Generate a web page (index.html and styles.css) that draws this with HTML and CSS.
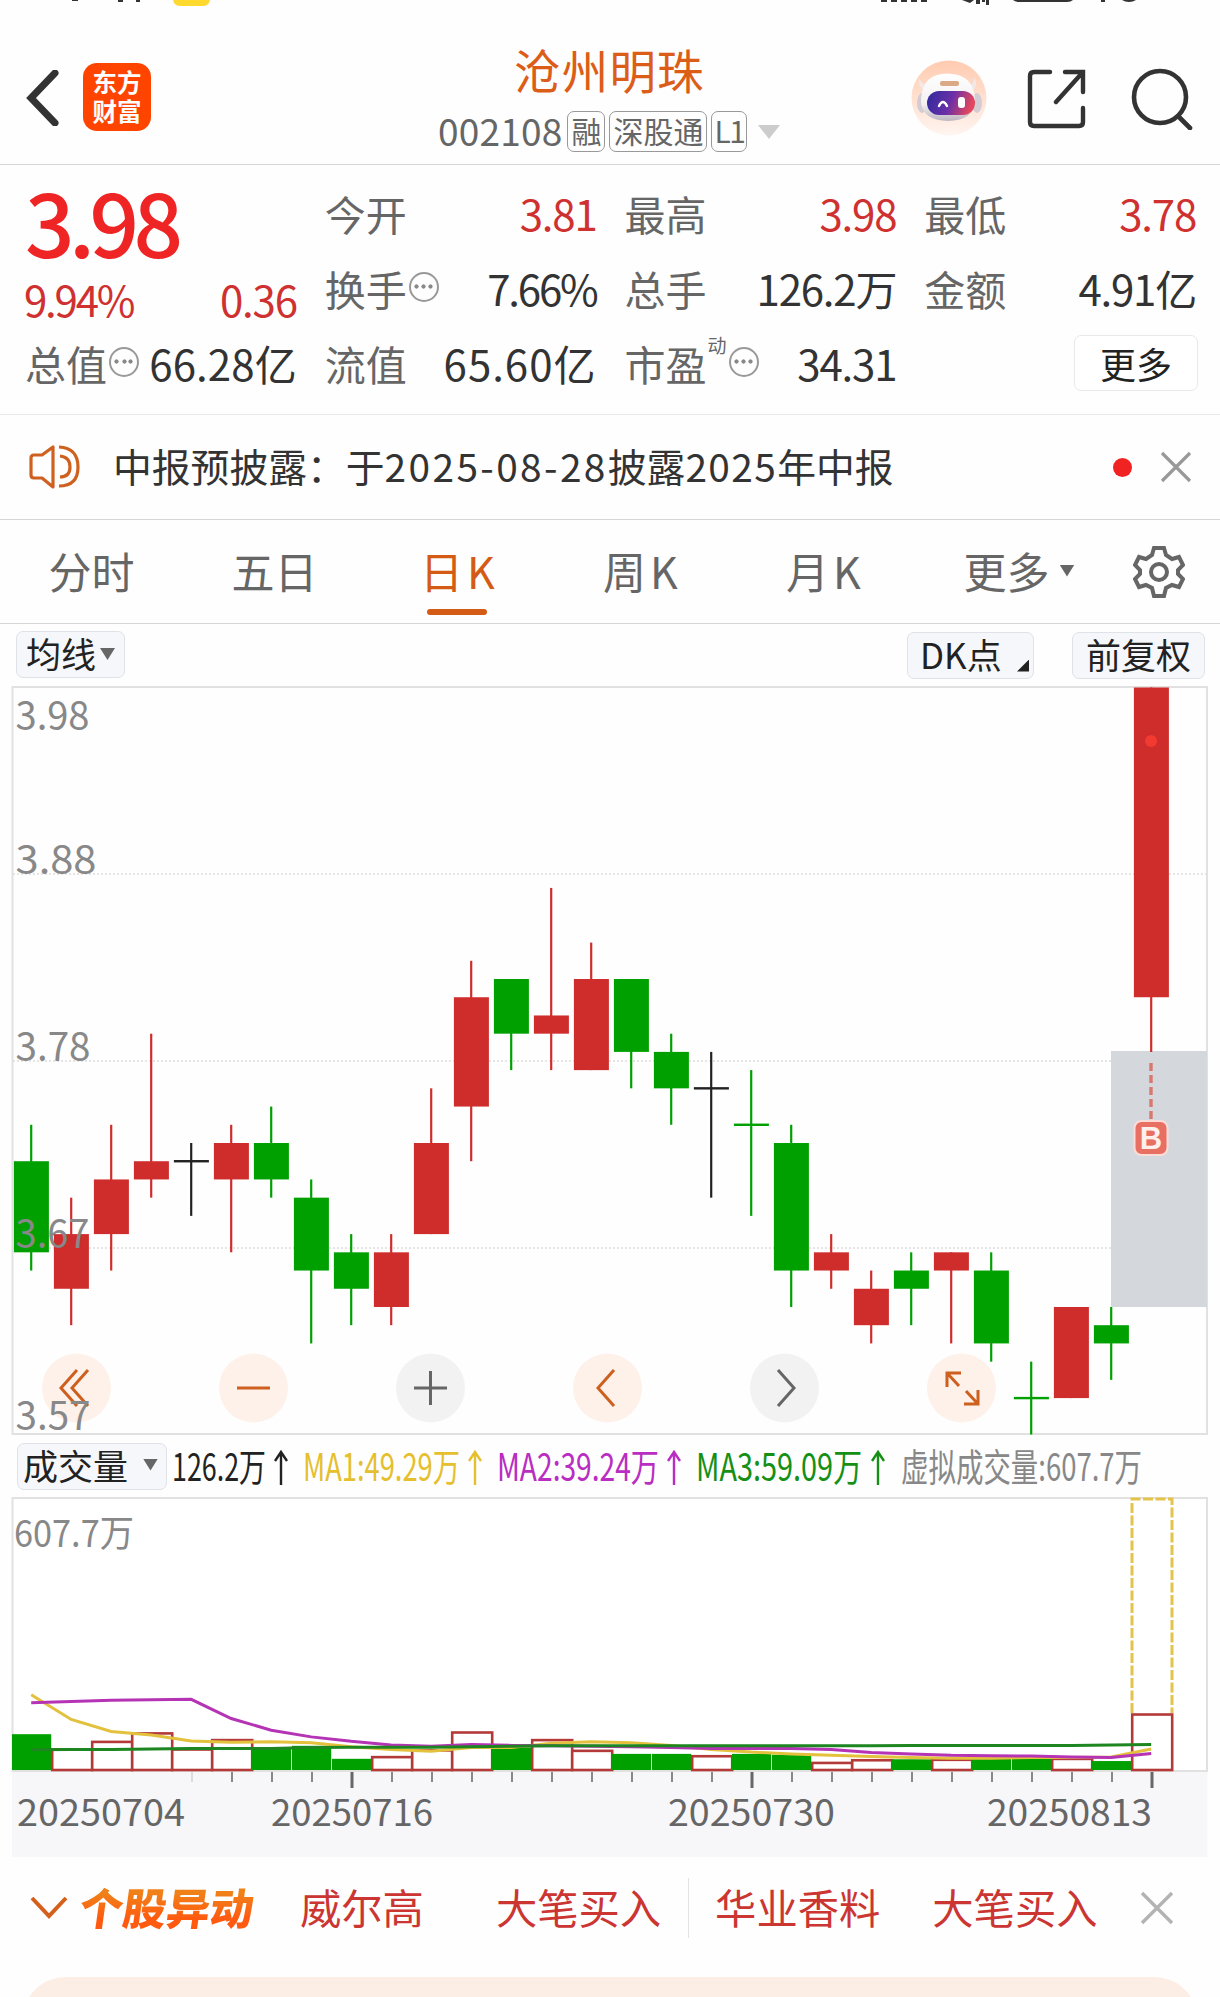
FILE: index.html
```html
<!DOCTYPE html>
<html lang="zh-CN">
  <head>
    <meta charset="UTF-8" />
    <title>沧州明珠 002108</title>
    <link rel="stylesheet" href="styles.css">
  </head>
  <body>
    <header class="header">
      <svg class="status" width="1220" height="8" viewBox="0 0 1220 8">
        <path d="M72 0h6v1h-6zM118 0h5v2h-5zM136 0h4v2h-4z" fill="#333" />
        <path d="M173 0h37q-1 6-8 6h-21q-7 0-8-6z" fill="#ffd92e" />
        <path d="M881 0h6v2h-6zM891 0h6v2h-6zM901 0h6v2h-6zM911 0h6v2h-6zM921 0h6v2h-6zM962 0h12l-4 3zM976 0h4v4h-4zM982 0h3v2h-3zM986 0h3v5h-3zM1013 0h60q-2 2-6 2h-48q-4 0-6-2zM1101 0h4v2h-4zM1122 0h14q-3 2-7 2t-7-2z" fill="#333" />
      </svg>
      <div class="header-row">
        <svg class="back" width="34" height="56" viewBox="0 0 34 56">
          <path d="M29 3 5 28l24 25" fill="none" stroke="#333" stroke-width="7" stroke-linecap="round" />
        </svg>
        <div class="logo"><span>东方</span><span>财富</span></div>
        <div class="stock">
          <h1 class="stock-name">沧州明珠</h1>
          <div class="stock-code">
            <span class="code">002108</span>
            <span class="tag">融</span>
            <span class="tag">深股通</span>
            <span class="tag tag-l1">L1</span>
            <svg class="code-arrow" width="22" height="14" viewBox="0 0 22 14"><path d="M0 0h22L11 14z" fill="#ccc" /></svg>
          </div>
        </div>
        <div class="header-icons">
          <svg width="76" height="76" viewBox="0 0 76 76">
            <defs>
              <linearGradient id="faceBg" x1="0" y1="0" x2="0" y2="1"><stop offset="0" stop-color="#ffcbb0" /><stop offset="1" stop-color="#fff5f0" /></linearGradient>
              <linearGradient id="visor" x1="0" y1="0" x2="1" y2=".2"><stop offset="0" stop-color="#2c2b9c" /><stop offset=".55" stop-color="#6a2fa8" /><stop offset="1" stop-color="#e2475f" /></linearGradient>
              <linearGradient id="helmet" x1="0" y1="0" x2="0" y2="1"><stop offset="0" stop-color="#fff" /><stop offset=".65" stop-color="#f3eff2" /><stop offset="1" stop-color="#bdb6c0" /></linearGradient>
            </defs>
            <circle cx="38" cy="38" r="37.5" fill="url(#faceBg)" />
            <ellipse cx="11" cy="43" rx="5" ry="10" fill="#d3ccd4" />
            <ellipse cx="66" cy="43" rx="5" ry="10" fill="#d3ccd4" />
            <path d="M8 17q1 7 9 8l-1 7q-10-4-8-15zM63 17q1 7-5 8l3 6q7-6 2-14z" fill="#f1e9e8" />
            <path d="M10 42q0-22 16-27 9-3 21 0 17 5 17 27-1 18-27 19-26-1-27-19z" fill="url(#helmet)" />
            <rect x="29" y="21" width="19" height="5" rx="2" fill="#dba985" />
            <rect x="16" y="31" width="48" height="24" rx="12" fill="url(#visor)" />
            <path d="M28 46q4-8 8 0" fill="none" stroke="#fff" stroke-width="2.4" stroke-linecap="round" />
            <rect x="47" y="37" width="7" height="11" rx="3" fill="#fff" />
          </svg>
          <svg class="share" width="60" height="60" viewBox="0 0 60 60" fill="none" stroke="#333" stroke-width="4.4" stroke-linecap="round">
            <path d="M23 3H7Q3 3 3 7v46q0 4 4 4h45q4 0 4-4V39M38 3h18v20M56 3 29 33" />
          </svg>
          <svg class="search" width="62" height="62" viewBox="0 0 62 62" fill="none" stroke="#333" stroke-width="4.6" stroke-linecap="round">
            <circle cx="29" cy="29" r="26" /><path d="M48 49l11 11" />
          </svg>
        </div>
      </div>
    </header>

    <section class="quote">
      <div class="col">
        <div class="price">3.98</div>
        <div class="item change"><b class="up pct">9.94%</b><b class="up">0.36</b></div>
        <div class="item"><span>总值</span><i class="info"></i><b class="wide">66.28亿</b></div>
      </div>
      <div class="col">
        <div class="item"><span>今开</span><b class="up">3.81</b></div>
        <div class="item"><span>换手</span><i class="info"></i><b class="pct">7.66%</b></div>
        <div class="item"><span>流值</span><b class="wider">65.60亿</b></div>
      </div>
      <div class="col">
        <div class="item"><span>最高</span><b class="up">3.98</b></div>
        <div class="item"><span>总手</span><b>126.2万</b></div>
        <div class="item"><span>市盈</span><sup>动</sup><i class="info"></i><b>34.31</b></div>
      </div>
      <div class="col">
        <div class="item"><span>最低</span><b class="up">3.78</b></div>
        <div class="item"><span>金额</span><b>4.91亿</b></div>
        <div class="item"><button class="more">更多</button></div>
      </div>
    </section>

    <section class="notice">
      <svg width="54" height="46" viewBox="0 0 54 46" fill="none" stroke="#cf6120" stroke-width="3.2" stroke-linejoin="round">
        <path d="M24 3v40L13 34H5q-3 0-3-3V14q0-3 3-3h8zM30 3q19 1 19 20T30 42M31 12q10 1 10 11T31 33" />
      </svg>
      <p class="notice-text">中报预披露：于<span class="date">2025-08-28</span>披露<span class="year">2025</span>年中报</p>
      <i class="dot"></i>
      <svg width="32" height="32" viewBox="0 0 32 32"><path d="M2 2l28 28M30 2 2 30" stroke="#999" stroke-width="3.2" /></svg>
    </section>

    <nav class="tabs">
      <a>分时</a>
      <a>五日</a>
      <a class="active">日<span class="k">K</span></a>
      <a>周<span class="k">K</span></a>
      <a>月<span class="k">K</span></a>
      <a class="tab-more">更多<i class="tri"></i></a>
      <svg width="52" height="52" viewBox="0 0 52 52" fill="none" stroke="#666" stroke-width="4" stroke-linejoin="miter">
        <path d="M21 2h10l2 7 6 4 7-2 4 8-5 5v4l5 5-4 8-7-2-6 3-2 8H21l-2-8-6-3-7 2-4-8 5-5v-4l-5-5 4-8 7 2 6-4z" />
        <circle cx="26" cy="26" r="8" />
      </svg>
    </nav>

    <div class="toolbar">
      <button class="chip chip-ma">均线<i class="tri"></i></button>
      <button class="chip chip-dk">DK点<i class="corner"></i></button>
      <button class="chip chip-fq">前复权</button>
    </div>

    <svg id="kline" class="chart" width="1220" height="749" viewBox="0 0 1220 749"></svg>

    <div class="legend">
      <button class="chip chip-vol">成交量<i class="tri"></i></button>
      <svg id="legend" class="legend-values" width="1000" height="62" viewBox="170 0 1000 62"></svg>
    </div>

    <svg id="volume" class="chart" width="1220" height="360" viewBox="0 0 1220 360"></svg>

    <section class="news">
      <svg class="news-arrow" width="38" height="24" viewBox="0 0 38 24"><path d="M2 2l17 18L36 2" fill="none" stroke="#d4601c" stroke-width="4" /></svg>
      <strong class="news-title">个股异动</strong>
      <span class="news-name">威尔高</span>
      <span class="news-event">大笔买入</span>
      <i class="news-line"></i>
      <span class="news-name2">华业香料</span>
      <span class="news-event2">大笔买入</span>
      <svg width="34" height="34" viewBox="0 0 34 34"><path d="M2 2l30 30M32 2 2 32" stroke="#b3b3b3" stroke-width="3.4" /></svg>
    </section>
    <div class="banner"></div>

    <script>
      const RED = "#cf2d2c", GREEN = "#00a000", BLACK = "#222";
      const FIRST = 31.2, STEP = 40, CENT = 18.22;

      // [type, high, body top, body bottom, low], cents below 3.98
      const candles = [
        ["g", 24, 26, 31, 32], ["r", 28, 30, 33, 35], ["r", 24, 27, 30, 32], ["r", 19, 26, 27, 28],
        ["b", 25, 26, 26, 29], ["r", 24, 25, 27, 31], ["g", 23, 25, 27, 28], ["g", 27, 28, 32, 36],
        ["g", 30, 31, 33, 35], ["r", 30, 31, 34, 35], ["r", 22, 25, 30, 30], ["r", 15, 17, 23, 26],
        ["g", 16, 16, 19, 21], ["r", 11, 18, 19, 21], ["r", 14, 16, 21, 21], ["g", 16, 16, 20, 22],
        ["g", 19, 20, 22, 24], ["b", 20, 22, 22, 28], ["g", 21, 24, 24, 29], ["g", 24, 25, 32, 34],
        ["r", 30, 31, 32, 33], ["r", 32, 33, 35, 36], ["g", 31, 32, 33, 35], ["r", 31, 31, 32, 36],
        ["g", 31, 32, 36, 37], ["g", 37, 39, 39, 41], ["r", 34, 34, 39, 39], ["g", 34, 35, 36, 38],
        ["r", 0, 0, 17, 20],
      ];
      const volumes = [80, 48, 65, 84, 48, 69, 50, 54, 25, 31, 46, 86, 50, 69, 45, 36, 36, 33, 36, 34, 18, 24, 24, 25, 25, 25, 27, 20, 126.2];
      const ma = [
        ["#e3c13c", [168, 113, 86, 78, 65, 62, 63, 61, 52, 46, 42, 50, 50, 60, 63, 61, 55, 46, 40, 36, 33, 30, 28, 26, 26, 28, 28, 29, 47]],
        ["#b534b5", [150, 153, 156, 157, 158, 115, 89, 74, 64, 56, 53, 57, 55, 54, 53, 52, 50, 48, 48, 48, 46, 39, 36, 33, 32, 31, 29, 28, 37]],
        ["#1d8620", [45, 46, 46, 47, 48, 48, 48, 50, 51, 51, 51, 52, 53, 54, 54, 54, 54, 54, 54, 54, 54, 54, 55, 55, 55, 55, 55, 56, 57]],
      ];

      const cx = (i) => FIRST + i * STEP;
      const rect = (x, y, w, h, attrs) => `<rect x="${x}" y="${y}" width="${w}" height="${h}" ${attrs} />`;
      const line = (x1, y1, x2, y2, attrs) => `<path d="M${x1} ${y1}L${x2} ${y2}" ${attrs} />`;
      const text = (x, y, size, len, color, str) =>
        `<text x="${x}" y="${y}" font-size="${size}" fill="${color}" textLength="${len}" lengthAdjust="spacingAndGlyphs">${str}</text>`;

      function drawKline() {
        const py = (c) => 1.5 + c * CENT;
        let s = rect(12.5, 1, 1194.5, 747, 'fill="none" stroke="#e1e1e1" stroke-width="2"');
        [188, 375, 562].forEach((y) => {
          s += line(13, y, 1206, y, 'stroke="#ddd" stroke-width="1.5" stroke-dasharray="2 2"');
        });
        s += rect(1111, 365, 96, 256, 'fill="#d4d8dd"');
        candles.forEach(([t, hi, top, bot, lo], i) => {
          const color = { r: RED, g: GREEN, b: BLACK }[t];
          s += line(cx(i), py(hi), cx(i), py(lo), `stroke="${color}" stroke-width="2.2"`);
          s += top === bot
            ? rect(cx(i) - 17.3, py(top) - 1.2, 35, 2.4, `fill="${color}"`)
            : rect(cx(i) - 17.3, py(top), 35, py(bot) - py(top), `fill="${color}"`);
        });
        s += '<circle cx="1151" cy="55" r="6" fill="#f23a30" />';
        // buy marker
        s += line(1151, 377, 1151, 433, 'stroke="#d9786f" stroke-width="3.4" stroke-dasharray="8 4"');
        s += rect(1134.5, 435, 33, 34, 'rx="7" fill="#e87063" stroke="#fbdcd7" stroke-width="2"');
        s += '<text class="buy" x="1151" y="463" text-anchor="middle">B</text>';
        // zoom and pan buttons
        const icons = [
          ["M77 684 61 702l16 18M88 684 72 702l16 18", 1],
          ["M237 702h33", 1],
          ["M414 702h33M430.5 685v34", 0],
          ["M614 684 598 702l16 18", 1],
          ["M778 684l16 18-16 18", 0],
          ["M947 701v-14h14M947 687l12 13M978 704v14h-14M978 718l-12-13", 1],
        ];
        icons.forEach(([d, on], i) => {
          s += `<circle cx="${76.5 + i * 177}" cy="702" r="34.5" fill="${on ? "#fef1ea" : "#f2f2f2"}" />`;
          s += `<path d="${d}" fill="none" stroke="${on ? "#cd601f" : "#666"}" stroke-width="3" />`;
        });
        [["3.98", 44, 74], ["3.88", 188, 81], ["3.78", 375, 75], ["3.67", 562, 74], ["3.57", 744, 75]].forEach(([p, y, w]) => {
          s += text(15.5, y, 39, w, "#888", p);
        });
        document.getElementById("kline").innerHTML = s;
      }

      function drawLegend() {
        const items = [
          [172, 94, 281, "#222", "126.2万"],
          [303, 157, 475, "#e5bf2e", "MA1:49.29万"],
          [497, 162, 674, "#b92dc2", "MA2:39.24万"],
          [696, 166, 878, "#159015", "MA3:59.09万"],
          [901, 241, 0, "#888", "虚拟成交量:607.7万"],
        ];
        document.getElementById("legend").innerHTML = items.map(([x, w, ax, color, str]) =>
          text(x, 46, 38, w, color, str) +
          (ax ? `<path d="M${ax} 50V17M${ax - 6} 26l6-9 6 9" fill="none" stroke="${color}" stroke-width="2.4" />` : "")
        ).join("");
      }

      function drawVolume() {
        const vy = (v) => 273 - v * 0.4476;
        let s = rect(12, 274, 1195.5, 86, 'fill="#f7f7fa"');
        s += rect(12.5, 1, 1194.5, 273, 'fill="#fff" stroke="#e1e1e1" stroke-width="2"');
        // projected volume for the current day
        s += '<path d="M1132 216V2h40v214" fill="none" stroke="#e3c34c" stroke-width="3" stroke-dasharray="10 2.5" />';
        volumes.forEach((v, i) => {
          const x = cx(i) - STEP / 2, y = vy(v);
          s += candles[i][0] === "g"
            ? rect(x + 0.8, y, STEP - 0.8, 273 - y, `fill="${GREEN}"`)
            : rect(x + 1, y + 1, STEP, 272 - y, 'fill="#fff" stroke="#b33a38" stroke-width="2.6"');
        });
        ma.forEach(([color, list]) => {
          s += `<polyline points="${list.map((v, i) => cx(i) + "," + vy(v)).join(" ")}" fill="none" stroke="${color}" stroke-width="3" />`;
        });
        for (let i = 4; i < 29; i++) {
          const major = i % 10 === 8;
          s += line(cx(i) + 0.8, 275, cx(i) + 0.8, major ? 291 : 285, `stroke="${i === 4 ? "#ddd" : major ? "#666" : "#888"}" stroke-width="${major ? 3 : 2}"`);
        }
        s += text(14, 50, 37, 120, "#888", "607.7万");
        s += text(17, 329, 36.5, 168, "#666", "20250704");
        s += text(271, 329, 36.5, 162, "#666", "20250716");
        s += text(668, 329, 36.5, 167, "#666", "20250730");
        s += text(987, 329, 36.5, 165, "#666", "20250813");
        document.getElementById("volume").innerHTML = s;
      }

      drawKline();
      drawLegend();
      drawVolume();
    </script>
  </body>
</html>
```
FILE: styles.css
```css
* {
  box-sizing: border-box;
}
body {
  font-family: "Noto Sans CJK SC", "Noto Sans", sans-serif;
  width: 1220px;
  height: 1997px;
  margin: 0;
  overflow: hidden;
  background-color: #fefefe;
  color: #333;
}
svg {
  display: block;
  flex-shrink: 0;
}
i {
  display: block;
  flex-shrink: 0;
}
button {
  font-family: inherit;
  color: #222;
  padding: 0;
}

/* header */
.header {
  height: 165px;
  border-bottom: 1px solid #d6d6d6;
}
.header-row {
  display: grid;
  grid-template-columns: 57px 411px 284px 1fr;
  height: 156px;
  padding-left: 26px;
}
.back {
  margin-top: 62px;
}
.logo {
  width: 68px;
  height: 68px;
  margin-top: 55px;
  padding-top: 4px;
  border-radius: 14px;
  background-color: #ff4400;
  color: #fff;
  font-size: 24.5px;
  font-weight: bold;
  line-height: 29px;
  text-align: center;
  display: flex;
  flex-direction: column;
}
.stock {
  display: flex;
  flex-direction: column;
  align-items: flex-start;
  margin-left: -56px;
}
.stock-name {
  margin: 36px 0 0 76px;
  font-size: 46.5px;
  font-weight: 400;
  line-height: 50px;
  letter-spacing: 1.2px;
  color: #dc5d17;
  white-space: nowrap;
}
.stock-code {
  display: flex;
  align-items: center;
  height: 41px;
  margin-top: 17px;
  color: #666;
  white-space: nowrap;
}
.code {
  font-size: 37px;
  line-height: 41px;
  letter-spacing: 0.2px;
  margin: -2px 5px 0 0;
}
.tag {
  height: 41px;
  padding: 0 3px;
  margin-right: 4px;
  border: 1.5px solid #999;
  border-radius: 7px;
  font-size: 30px;
  line-height: 36px;
}
.tag-l1 {
  padding: 0 2px;
  letter-spacing: -1.5px;
}
.code-arrow {
  margin-left: 7px;
}
.header-icons {
  display: flex;
  padding: 52px 0 0 133px;
}
.share {
  margin: 9px 0 0 40px;
}
.search {
  margin: 8px 0 0 44px;
}

/* quote panel */
.quote {
  display: grid;
  grid-template-columns: repeat(4, 1fr);
  gap: 28px;
  height: 250px;
  padding: 10px 24px 0 25px;
  border-bottom: 1px solid #e8e8e8;
}
.item {
  display: flex;
  align-items: center;
  height: 75px;
  font-size: 41px;
  white-space: nowrap;
}
.item span {
  color: #666;
}
.item b {
  margin-left: auto;
  font-size: 42px;
  font-weight: 400;
  letter-spacing: -1.2px;
}
.item b.wide {
  letter-spacing: 0.1px;
}
.item b.wider {
  letter-spacing: 1px;
}
.item b.pct {
  letter-spacing: -2.2px;
}
.item.change {
  padding-top: 22px;
}
.item.change b:first-child {
  margin-left: -1px;
}
.item b.up {
  color: #cf3130;
}
.item sup {
  align-self: flex-start;
  font-size: 19px;
  line-height: 20px;
  color: #666;
  margin: 10px 0 0 1px;
}
.item .info {
  width: 30px;
  height: 30px;
  margin: -2px 0 0 2px;
  border: 2.5px solid #999;
  border-radius: 50%;
  background: radial-gradient(circle at 50% 50%, #888 1.8px, transparent 2.4px) center / 7px 7px no-repeat,
    radial-gradient(circle at 50% 50%, #888 1.8px, transparent 2.4px) 2px center / 7px 7px no-repeat,
    radial-gradient(circle at 50% 50%, #888 1.8px, transparent 2.4px) 16px center / 7px 7px no-repeat;
}
.price {
  height: 75px;
  padding-top: 8px;
  font-size: 87px;
  font-weight: 500;
  line-height: 75px;
  letter-spacing: -5.5px;
  color: #ef2424;
}
.more {
  width: 124px;
  height: 56px;
  margin-left: auto;
  margin-right: -2px;
  border: 1.5px solid #e6e8ea;
  border-radius: 7px;
  background-color: #fff;
  font-size: 36px;
  line-height: 48px;
}

/* notice */
.notice {
  display: flex;
  align-items: center;
  height: 105px;
  padding: 0 28px 0 29px;
  border-bottom: 1px solid #d6d6d6;
}
.notice-text {
  flex: 1;
  margin: -5px 0 0 30px;
  font-size: 38.8px;
  line-height: 60px;
  white-space: nowrap;
}
.date {
  letter-spacing: 2.4px;
}
.year {
  letter-spacing: 1.4px;
}
.dot {
  width: 19px;
  height: 19px;
  margin-right: 28px;
  border-radius: 50%;
  background-color: #f02222;
}

/* tabs */
.tabs {
  display: flex;
  align-items: center;
  height: 104px;
  border-bottom: 1px solid #d6d6d6;
  color: #666;
}
.tabs a {
  position: relative;
  display: flex;
  align-items: center;
  justify-content: center;
  width: 183px;
  height: 103px;
  padding-bottom: 4px;
  font-size: 43px;
}
.k {
  margin-left: 4px;
}
.tabs .active {
  color: #d45b16;
}
/* marker under the current tab */
.tabs .active::after {
  content: "";
  position: absolute;
  left: 61px;
  bottom: 8px;
  width: 60px;
  height: 6px;
  border-radius: 3px;
  background-color: #d45b16;
}
.tabs .tab-more {
  width: 218px;
  padding-right: 10px;
}
.tri {
  width: 15px;
  height: 12px;
  background-color: #666;
  clip-path: polygon(0 0, 100% 0, 50% 100%);
}
.tab-more .tri {
  margin: 2px 0 0 10px;
}

/* chart toolbar */
.toolbar {
  display: flex;
  align-items: flex-start;
  height: 62px;
  padding: 7px 15px 0 16px;
}
.chip {
  display: flex;
  align-items: center;
  height: 47px;
  padding: 0 9px 4px;
  border: 1.5px solid #dfe2e7;
  border-radius: 7px;
  background-color: #f6f7fb;
  font-size: 35px;
  white-space: nowrap;
}
.chip-ma .tri {
  margin: 3px 0 0 4px;
}
.chip-dk {
  width: 127px;
  margin: 1px 38px 0 auto;
  padding: 0 4px 4px 12px;
}
.chip-fq {
  width: 133px;
  margin-top: 1px;
  padding: 0 0 4px 13px;
}
.corner {
  width: 12px;
  height: 12px;
  margin: 24px 0 0 auto;
  background-color: #222;
  clip-path: polygon(100% 0, 100% 100%, 0 100%);
}

/* charts */
.chart {
  font-family: "Noto Sans CJK SC", sans-serif;
}
.buy {
  font-family: "Liberation Sans", sans-serif;
  font-size: 31px;
  font-weight: bold;
  fill: #fff0ee;
}
.legend {
  display: flex;
  height: 62px;
  padding-left: 17px;
}
.chip-vol {
  width: 150px;
  margin-top: 8px;
  padding: 0 8px 4px 5px;
  justify-content: space-between;
}
.legend-values {
  margin-left: 3px;
}

/* stock moves */
.news {
  display: flex;
  align-items: center;
  height: 120px;
  padding: 0 46px 18px 30px;
  font-size: 41.3px;
  color: #cb3532;
  white-space: nowrap;
}
.news span,
.news strong {
  margin-top: -4px;
}
.news .news-title {
  margin-left: 12px;
  width: 178px;
  font-size: 43.5px;
  font-weight: 900;
  transform: skewX(-8deg);
  background-image: linear-gradient(#f08018 30%, #ff5a10 70%);
  background-clip: text;
  -webkit-background-clip: text;
  color: transparent;
}
.news-name {
  margin-left: 42px;
}
.news-event {
  margin-left: 72px;
}
.news-line {
  width: 1px;
  height: 60px;
  margin-left: 27px;
  background-color: #e3e3e3;
}
.news-name2 {
  margin-left: 26px;
}
.news-event2 {
  margin-left: 52px;
  margin-right: auto;
}
.banner {
  height: 60px;
  margin: 0 22px;
  border-radius: 44px 44px 0 0;
  background-color: #fdeee5;
}
```
